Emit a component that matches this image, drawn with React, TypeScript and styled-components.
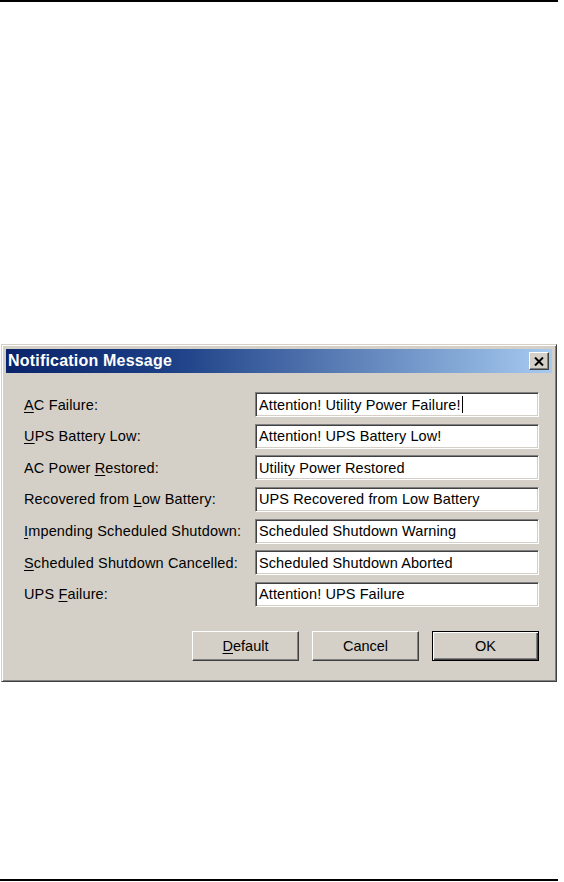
import * as React from "react";
import styled, { createGlobalStyle } from "styled-components";

const GlobalStyle = createGlobalStyle`
  html, body {
    margin: 0;
    padding: 0;
    background: #ffffff;
  }
`;

const Page = styled.div`
  width: 564px;
  height: 882px;
  display: flex;
  flex-direction: column;
  font-family: "Liberation Sans", Arial, sans-serif;
`;

const Rule = styled.div<{ $top?: boolean }>`
  width: 558px;
  height: 2px;
  background: #000;
  margin-top: ${({ $top }) => ($top ? "0" : "auto")};
  margin-bottom: ${({ $top }) => ($top ? "0" : "1px")};
`;

const Window = styled.div`
  margin: 342px 0 0 1px;
  width: 556px;
  box-sizing: border-box;
  background: #d4d0c8;
  border-top: 1px solid #d4d0c8;
  border-left: 1px solid #d4d0c8;
  border-right: 1px solid #404040;
  border-bottom: 1px solid #404040;
  box-shadow: inset 1px 1px 0 #ffffff, inset -1px -1px 0 #808080;
  padding: 4px;
`;

const TitleBar = styled.div`
  height: 24px;
  display: flex;
  align-items: center;
  justify-content: space-between;
  padding: 0 3px 0 2px;
  background: linear-gradient(to right, #0a246a 0%, #1c3f86 30%, #a6caf0 100%);
`;

const Title = styled.span`
  color: #fff;
  font-weight: bold;
  font-size: 16px;
  letter-spacing: 0.2px;
`;

const CloseButton = styled.div`
  width: 20px;
  height: 18px;
  box-sizing: border-box;
  background: #d4d0c8;
  border-top: 1px solid #fff;
  border-left: 1px solid #fff;
  border-right: 1px solid #404040;
  border-bottom: 1px solid #404040;
  box-shadow: inset -1px -1px 0 #808080;
  display: flex;
  align-items: center;
  justify-content: center;
`;

const Body = styled.div`
  padding: 19px 13px 16px 18px;
`;

const Form = styled.div`
  display: grid;
  grid-template-columns: 231px 1fr;
  row-gap: 6.66px;
  align-items: center;
`;

const Label = styled.span`
  font-size: 14.5px;
  color: #000;
  letter-spacing: 0.15px;
`;

const Key = styled.span`
  text-decoration: underline;
  text-underline-offset: 2px;
`;

const Field = styled.div`
  height: 25px;
  box-sizing: border-box;
  background: #fff;
  border-top: 1px solid #808080;
  border-left: 1px solid #808080;
  border-right: 1px solid #fff;
  border-bottom: 1px solid #fff;
  box-shadow: inset 1px 1px 0 #404040, inset -1px -1px 0 #d4d0c8;
  padding: 0 3px;
  display: flex;
  align-items: center;
  font-size: 14.5px;
  color: #000;
  letter-spacing: 0.1px;
  white-space: nowrap;
`;

const Caret = styled.span`
  display: inline-block;
  width: 1px;
  height: 17px;
  background: #000;
  margin-left: 1px;
`;

const Buttons = styled.div`
  display: flex;
  justify-content: flex-end;
  gap: 13px;
  margin-top: 24px;
`;

const Button = styled.div<{ $default?: boolean }>`
  width: 107px;
  height: 30px;
  box-sizing: border-box;
  display: flex;
  align-items: center;
  justify-content: center;
  font-size: 14.5px;
  color: #000;
  background: #d4d0c8;
  border: 1px solid;
  border-top-color: ${({ $default }) => ($default ? "#000" : "#fff")};
  border-left-color: ${({ $default }) => ($default ? "#000" : "#fff")};
  border-right-color: ${({ $default }) => ($default ? "#000" : "#404040")};
  border-bottom-color: ${({ $default }) => ($default ? "#000" : "#404040")};
  box-shadow: ${({ $default }) =>
    $default
      ? "inset 1px 1px 0 #fff, inset -1px -1px 0 #404040, inset -2px -2px 0 #808080"
      : "inset -1px -1px 0 #808080"};
`;

const rows: { label: React.ReactNode; value: string; caret?: boolean }[] = [
  { label: <><Key>A</Key>C Failure:</>, value: "Attention! Utility Power Failure!", caret: true },
  { label: <><Key>U</Key>PS Battery Low:</>, value: "Attention! UPS Battery Low!" },
  { label: <>AC Power <Key>R</Key>estored:</>, value: "Utility Power Restored" },
  { label: <>Recovered from <Key>L</Key>ow Battery:</>, value: "UPS Recovered from Low Battery" },
  { label: <><Key>I</Key>mpending Scheduled Shutdown:</>, value: "Scheduled Shutdown Warning" },
  { label: <><Key>S</Key>cheduled Shutdown Cancelled:</>, value: "Scheduled Shutdown Aborted" },
  { label: <>UPS <Key>F</Key>ailure:</>, value: "Attention! UPS Failure" },
];

export default function App() {
  return (
    <Page>
      <GlobalStyle />
      <Rule $top />
      <Window>
        <TitleBar>
          <Title>Notification Message</Title>
          <CloseButton>
            <svg width="10" height="9" viewBox="0 0 10 9">
              <path d="M1 0.5 L9 8.5 M9 0.5 L1 8.5" stroke="#000" strokeWidth="2" />
            </svg>
          </CloseButton>
        </TitleBar>
        <Body>
          <Form>
            {rows.map((row, i) => (
              <React.Fragment key={i}>
                <Label>{row.label}</Label>
                <Field>
                  {row.value}
                  {row.caret && <Caret />}
                </Field>
              </React.Fragment>
            ))}
          </Form>
          <Buttons>
            <Button><Key>D</Key>efault</Button>
            <Button>Cancel</Button>
            <Button $default>OK</Button>
          </Buttons>
        </Body>
      </Window>
      <Rule />
    </Page>
  );
}
